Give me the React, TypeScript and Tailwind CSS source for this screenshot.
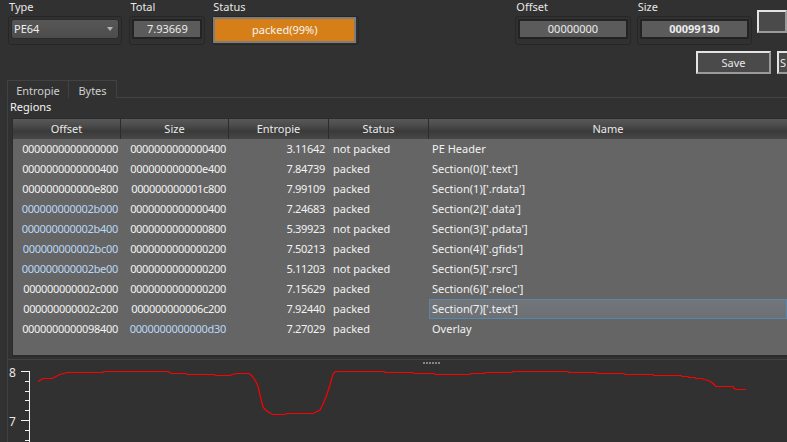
import React from 'react';

const rows: [string, string, string, string, string][] = [
  ['0000000000000000', '0000000000000400', '3.11642', 'not packed', 'PE Header'],
  ['0000000000000400', '000000000000e400', '7.84739', 'packed', "Section(0)['.text']"],
  ['000000000000e800', '000000000001c800', '7.99109', 'packed', "Section(1)['.rdata']"],
  ['000000000002b000', '0000000000000400', '7.24683', 'packed', "Section(2)['.data']"],
  ['000000000002b400', '0000000000000800', '5.39923', 'not packed', "Section(3)['.pdata']"],
  ['000000000002bc00', '0000000000000200', '7.50213', 'packed', "Section(4)['.gfids']"],
  ['000000000002be00', '0000000000000200', '5.11203', 'not packed', "Section(5)['.rsrc']"],
  ['000000000002c000', '0000000000000200', '7.15629', 'packed', "Section(6)['.reloc']"],
  ['000000000002c200', '000000000006c200', '7.92440', 'packed', "Section(7)['.text']"],
  ['0000000000098400', '0000000000000d30', '7.27029', 'packed', 'Overlay'],
];

// offsets drawn with the blue ClearType tint in the shot
const blueOffset = [3, 4, 5, 6];
const blueSize = [9];

const curve =
  '38,381.5 43,378.5 52,378.5 60,374.5 67,372.5 103,372.5 104,371.5 168,371.5 172,373.5 186,373.5 187,374.5 214,374.5 216,375.5 230,375.5 232,374.5 237,373.5 249,373.5 252,376 255,380 258,386 260,395 263,407 266,410.5 270,413 273,414.5 285,414.5 287,413.5 313,413.5 316,412 320,410 323,404 326,397 330,385 333,374 335,372 338,371.5 384,371.5 385,372.5 413,372.5 414,373.5 434,373.5 435,374.5 470,374.5 471,373.5 484,373.5 485,372.5 512,372.5 513,371.5 568,371.5 569,372.5 596,372.5 597,373.5 624,373.5 625,374.5 653,374.5 654,375.5 681,375.5 682,376.5 688,376.5 689,377.5 695,377.5 696,378.5 702,378.5 704,379.5 708,380.5 712,382.5 714,384.5 716,386.5 733,386.5 734,388.5 736,389.5 746,389.5';

const Label = ({ children }: { children: React.ReactNode }) => (
  <div className="h-[16px] leading-[14px] pl-[1px] text-[#e8e8e8]">{children}</div>
);

const Frame = ({ children }: { children: React.ReactNode }) => (
  <div className="h-[29px] rounded-[3px] border border-[#262626] px-[2px] pt-[2px]">{children}</div>
);

const ValueBox = ({ children, bold }: { children: React.ReactNode; bold?: boolean }) => (
  <div
    className={`h-[20px] border-2 border-[#232323] bg-[#5b5b5b] text-center leading-[16px] text-[#ececec] ${
      bold ? 'font-bold' : ''
    }`}
  >
    {children}
  </div>
);

const Button = ({ children, className }: { children?: React.ReactNode; className?: string }) => (
  <div
    className={`h-[23px] border-2 border-t-[#e4e4e4] border-l-[#e4e4e4] border-b-[#9a9a9a] border-r-[#9a9a9a] bg-[#4a4a4a] leading-[19px] text-[#e8e8e8] ${className}`}
  >
    {children}
  </div>
);

export default function App() {
  return (
    <div className="w-[787px] h-[442px] overflow-hidden bg-[#313131] text-[11px] text-[#e6e6e6] font-['Noto_Sans',sans-serif]">
      {/* top controls */}
      <div className="flex h-[51px]">
        <div className="ml-[8px] w-[119px]">
          <Label>Type</Label>
          <Frame>
            <div className="flex h-[20px] items-center justify-between rounded-[3px] border border-[#2a2a2a] bg-gradient-to-b from-[#575757] to-[#4c4c4c] pl-[2px] pr-[5px]">
              <span className="leading-[16px] text-[#f0f0f0]">PE64</span>
              <span className="h-0 w-0 border-x-[3.5px] border-t-[4px] border-x-transparent border-t-[#b4b4b4]" />
            </div>
          </Frame>
        </div>
        <div className="ml-[7px] w-[79px]">
          <Label>Total</Label>
          <Frame>
            <ValueBox>7.93669</ValueBox>
          </Frame>
        </div>
        <div className="ml-[7px] w-[150px]">
          <Label>Status</Label>
          <div className="h-[29px] rounded-[3px] border border-[#262626] pr-[2px]">
            <div className="relative h-[26px] border-2 border-[#7c7c7c] bg-[#252525]">
              <div className="h-full w-[139px] bg-[#d67f19]" />
              <div className="absolute inset-0 text-center leading-[22px] text-[#f4f4f4]">packed(99%)</div>
            </div>
          </div>
        </div>
        <div className="ml-[156px] w-[120px]">
          <Label>Offset</Label>
          <Frame>
            <ValueBox>00000000</ValueBox>
          </Frame>
        </div>
        <div className="ml-[6px] w-[120px]">
          <Label>Size</Label>
          <Frame>
            <ValueBox bold>00099130</ValueBox>
          </Frame>
        </div>
        <Button className="ml-[5px] mt-[10px] w-[30px] shrink-0" />
      </div>
      <div className="flex h-[23px]">
        <Button className="ml-[696px] w-[75px] shrink-0 text-center">Save</Button>
        <Button className="ml-[6px] w-[30px] shrink-0 pl-[1px]">S</Button>
      </div>

      {/* tabs */}
      <div className="mt-[6px] flex h-[18px]">
        <div className="ml-[7px] w-[62px] border-l border-t border-r border-[#424242] pt-[3px] text-center leading-[14px] text-[#cfcfcf]">
          Entropie
        </div>
        <div className="w-[48px] border-t border-r border-[#424242] pt-[3px] text-center leading-[14px] text-[#cfcfcf]">
          Bytes
        </div>
        <div className="flex-1 border-b border-[#444444]" />
      </div>

      {/* panel */}
      <div className="ml-[7px] h-[344px] border-l border-[#404040]">
        <div className="h-[17px] pl-[2px] pt-[1px] leading-[16px] text-[#f4f4f4]">Regions</div>
        <div className="ml-[4px] mt-[3px] border-l border-t border-b-2 border-[#2b2b2b]">
          <div className="flex h-[20px] bg-[linear-gradient(to_bottom,#585858_0%,#4a4a4a_35%,#3a3a3a_60%,#474747_100%)] leading-[20px] text-[#eaeaea]">
            <div className="w-[108px] shrink-0 border-r border-[#2c2c2c] text-center">Offset</div>
            <div className="w-[108px] shrink-0 border-r border-[#2c2c2c] text-center">Size</div>
            <div className="w-[100px] shrink-0 border-r border-[#2c2c2c] text-center">Entropie</div>
            <div className="w-[100px] shrink-0 border-r border-[#2c2c2c] text-center">Status</div>
            <div className="flex-1 text-center">Name</div>
          </div>
          <div className="h-[216px] bg-[#656565]">
            {rows.map((r, i) => (
              <div key={i} className="flex h-[20px] leading-[20px] text-[#f2f2f2]">
                <div
                  className={`w-[108px] shrink-0 pr-[3px] text-right tracking-[-0.3px] ${
                    blueOffset.includes(i) ? 'text-[#b9d8f6]' : ''
                  }`}
                >
                  {r[0]}
                </div>
                <div
                  className={`w-[108px] shrink-0 pr-[3px] text-right tracking-[-0.3px] ${
                    blueSize.includes(i) ? 'text-[#b9d8f6]' : ''
                  }`}
                >
                  {r[1]}
                </div>
                <div className="w-[100px] shrink-0 pr-[4px] text-right tracking-[-0.3px]">{r[2]}</div>
                <div className="w-[100px] shrink-0 pl-[4px]">{r[3]}</div>
                {i === 8 ? (
                  <div className="flex-1 border border-[#5a86ad] bg-gradient-to-b from-[#727679] to-[#6b7075] pl-[2px] leading-[18px]">
                    {r[4]}
                  </div>
                ) : (
                  <div className="flex-1 pl-[3px]">{r[4]}</div>
                )}
              </div>
            ))}
          </div>
        </div>

        {/* splitter */}
        <div className="h-[7px] pt-[2px]">
          <div className="border-t border-[#424242]" />
          <div className="ml-[415px] mt-[2px] flex gap-[1px]">
            {[0, 1, 2, 3, 4, 5].map((d) => (
              <span key={d} className="h-[2px] w-[2px] bg-[#858585]" />
            ))}
          </div>
        </div>

        {/* entropy chart */}
        <svg width={779} height={78} viewBox="8 364 779 78" className="block">
          <text x={9} y={376.5} fill="#e8e8e8" fontSize={12} fontFamily="Noto Sans, sans-serif">
            8
          </text>
          <text x={9} y={425.5} fill="#e8e8e8" fontSize={12} fontFamily="Noto Sans, sans-serif">
            7
          </text>
          <g stroke="#f2f2f2" strokeWidth={1} shapeRendering="crispEdges">
            <line x1={29.5} y1={371} x2={29.5} y2={442} />
            <line x1={21} y1={371.5} x2={30} y2={371.5} />
            <line x1={21} y1={420.5} x2={30} y2={420.5} />
            {[381.5, 391.5, 400.5, 410.5, 430.5, 440.5].map((y) => (
              <line key={y} x1={25} y1={y} x2={30} y2={y} />
            ))}
          </g>
          <polyline points={curve} fill="none" stroke="#ff0000" strokeWidth={1.2} />
        </svg>
      </div>
    </div>
  );
}
